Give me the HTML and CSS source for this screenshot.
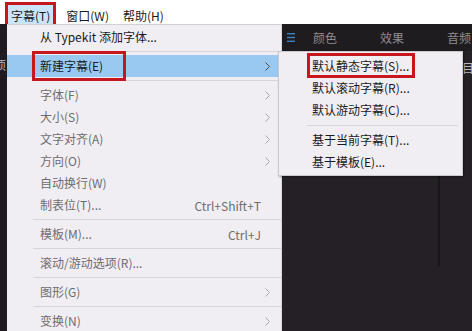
FILE: index.html
```html
<!DOCTYPE html>
<html lang="zh-CN">
<head>
  <meta charset="UTF-8">
  <title>字幕菜单</title>
  <link rel="stylesheet" href="styles.css">
</head>
<body>
  <div class="menubar">
    <span class="top-item open mark-top">字幕(T)</span>
    <span class="top-item">窗口(W)</span>
    <span class="top-item">帮助(H)</span>
  </div>

  <div class="workspace">
    <div class="strip"><span class="strip-glyph">项</span></div>

    <div class="menu">
      <div class="item enabled"><span class="label">从 Typekit 添加字体...</span></div>
      <div class="sep"></div>
      <div class="item enabled active">
        <span class="label mark-row">新建字幕(E)</span>
        <span class="arrow"><svg width="5" height="9" viewBox="0 0 5 9"><polyline points="0.5,0.5 4.5,4.5 0.5,8.5" /></svg></span>
      </div>
      <div class="sep"></div>
      <div class="item"><span class="label">字体(F)</span><span class="arrow"><svg width="5" height="9" viewBox="0 0 5 9"><polyline points="0.5,0.5 4.5,4.5 0.5,8.5" /></svg></span></div>
      <div class="item"><span class="label">大小(S)</span><span class="arrow"><svg width="5" height="9" viewBox="0 0 5 9"><polyline points="0.5,0.5 4.5,4.5 0.5,8.5" /></svg></span></div>
      <div class="item"><span class="label">文字对齐(A)</span><span class="arrow"><svg width="5" height="9" viewBox="0 0 5 9"><polyline points="0.5,0.5 4.5,4.5 0.5,8.5" /></svg></span></div>
      <div class="item"><span class="label">方向(O)</span><span class="arrow"><svg width="5" height="9" viewBox="0 0 5 9"><polyline points="0.5,0.5 4.5,4.5 0.5,8.5" /></svg></span></div>
      <div class="item"><span class="label">自动换行(W)</span><span class="arrow"></span></div>
      <div class="item"><span class="label">制表位(T)...</span><span class="shortcut">Ctrl+Shift+T</span><span class="arrow"></span></div>
      <div class="sep"></div>
      <div class="item"><span class="label">模板(M)...</span><span class="shortcut">Ctrl+J</span><span class="arrow"></span></div>
      <div class="sep"></div>
      <div class="item"><span class="label">滚动/游动选项(R)...</span><span class="arrow"></span></div>
      <div class="sep"></div>
      <div class="item"><span class="label">图形(G)</span><span class="arrow"><svg width="5" height="9" viewBox="0 0 5 9"><polyline points="0.5,0.5 4.5,4.5 0.5,8.5" /></svg></span></div>
      <div class="sep"></div>
      <div class="item"><span class="label">变换(N)</span><span class="arrow"><svg width="5" height="9" viewBox="0 0 5 9"><polyline points="0.5,0.5 4.5,4.5 0.5,8.5" /></svg></span></div>
    </div>

    <div class="panel">
      <div class="tabbar">
        <svg class="panel-icon" width="8" height="9" viewBox="0 0 8 9">
          <rect x="0" y="0" width="8" height="1.4" />
          <rect x="0" y="3.8" width="8" height="1.4" />
          <rect x="0" y="7.6" width="8" height="1.4" />
        </svg>
        <div class="tabs">
          <span class="tab">颜色</span>
          <span class="tab">效果</span>
          <span class="tab">音频</span>
        </div>
      </div>
      <div class="panel-body">
        <div class="panel-title">目标</div>
        <div class="panel-rule"></div>
      </div>
    </div>

    <div class="submenu">
      <div class="sub-item"><span class="label mark-sub">默认静态字幕(S)...</span></div>
      <div class="sub-item"><span class="label">默认滚动字幕(R)...</span></div>
      <div class="sub-item"><span class="label">默认游动字幕(C)...</span></div>
      <div class="sub-sep"></div>
      <div class="sub-item"><span class="label">基于当前字幕(T)...</span></div>
      <div class="sub-item"><span class="label">基于模板(E)...</span></div>
    </div>
  </div>
</body>
</html>
```

FILE: styles.css
```css
body {
  margin: 0;
  background: #242025;
  font-family: 'Noto Sans CJK SC', 'Noto Sans', sans-serif;
  font-size: 12px;
  color: #1a1a1a;
  width: 472px;
  height: 331px;
  overflow: hidden;
}

/* top menu bar */
.menubar {
  display: flex;
  align-items: flex-start;
  height: 24px;
  padding-left: 8px;
  background: #fff;
}
.top-item {
  margin-top: 5px;
  height: 22px;
  line-height: 21px;
  padding: 0 3px;
  margin-right: 10px;
}
.top-item:nth-child(2) { margin-right: 8px; }
.top-item.open {
  background: #cce4f7;
}
.mark-top {
  outline: 3px solid #c6161e;
  outline-offset: 0;
}

.workspace {
  position: relative;
  display: flex;
  height: 307px;
}

.strip {
  width: 7px;
  background: #1f1b20;
  overflow: hidden;
  padding-top: 32px;
  box-sizing: border-box;
}
.strip-glyph {
  display: block;
  margin-left: -6px;
  color: #b8b6ba;
  white-space: nowrap;
}

/* dropdown menu */
.menu {
  width: 274px;
  background: #f1eef3;
  border-top: 1px solid #d2cfd5;
  border-right: 1px solid #d9d6dc;
  padding-top: 1px;
}
.item {
  display: flex;
  align-items: center;
  height: 22px;
  padding-left: 33px;
  color: #6e6c70;
}
.item.enabled { color: #1a1a1a; }
.item.active { background: #99c9f0; }
.label {
  flex: 1;
  line-height: 22px;
  white-space: nowrap;
}
.shortcut {
  color: #6e6c70;
}
.arrow {
  width: 20px;
  padding-left: 4px;
  box-sizing: border-box;
  display: flex;
  align-items: center;
}
.arrow svg {
  fill: none;
  stroke: #a9a7ac;
  stroke-width: 1;
}
.item.active .arrow svg { stroke: #4a4a4a; }

.sep {
  height: 1px;
  margin: 3px 0 3px 26px;
  background: #d7d4da;
}

.mark-row {
  flex: 0 0 auto;
  margin-right: auto;
  position: relative;
}
.mark-row::after {
  content: "";
  position: absolute;
  left: -8px;
  right: -23px;
  top: -4px;
  bottom: -4px;
  border: 3px solid #c6161e;
}

/* dark panel behind */
.panel {
  flex: 1;
  background: #242025;
  overflow: hidden;
}
.tabbar {
  display: flex;
  align-items: center;
  height: 27px;
  padding-left: 5px;
  background: #1f1c20;
  color: #8e8c90;
}
.panel-icon {
  fill: #3d82c4;
}
.tabs {
  display: flex;
  gap: 43px;
  margin-left: 18px;
  white-space: nowrap;
}
.panel-body {
  padding: 7px 0 0 180px;
}
.panel-title {
  color: #b9b7bb;
  white-space: nowrap;
  line-height: 20px;
}
.panel-rule {
  width: 2px;
  height: 92px;
  margin: 96px 0 0 -24px;
  background: #19161a;
}

/* submenu popup */
.submenu {
  position: absolute;
  left: 278px;
  top: 27px;
  width: 183px;
  padding: 3px 0 2px;
  background: #f1eef3;
  border: 1px solid #cbc8ce;
  box-shadow: 1px 1px 2px rgba(0, 0, 0, 0.35);
}
.sub-item {
  display: flex;
  height: 22px;
  padding-left: 33px;
}
.sub-sep {
  height: 1px;
  margin: 4px 4px 3px 28px;
  background: #d7d4da;
}
.mark-sub {
  flex: 0 0 auto;
  position: relative;
}
.mark-sub::after {
  content: "";
  position: absolute;
  left: -5px;
  right: -6px;
  top: -2px;
  bottom: -1px;
  border: 3px solid #c6161e;
}
```
